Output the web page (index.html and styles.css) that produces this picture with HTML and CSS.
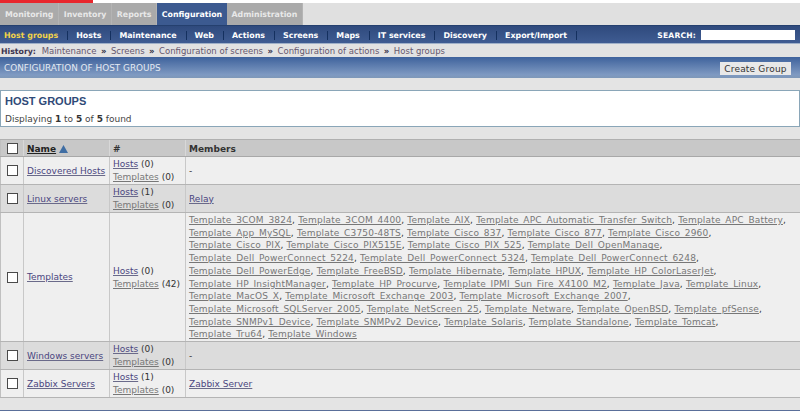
FILE: index.html
```html
<!DOCTYPE html>
<html lang="en">
<head>
<meta charset="utf-8">
<title>Host groups</title>
<link rel="stylesheet" href="styles.css">
</head>
<body>
<div class="topline"><div class="redbar"></div></div>
<nav class="tabs">
  <a class="tab">Monitoring</a><a class="tab">Inventory</a><a class="tab">Reports</a><a class="tab active">Configuration</a><a class="tab">Administration</a>
</nav>
<nav class="subnav">
  <a class="sub current">Host groups</a><a class="sub">Hosts</a><a class="sub">Maintenance</a><a class="sub">Web</a><a class="sub">Actions</a><a class="sub">Screens</a><a class="sub">Maps</a><a class="sub">IT services</a><a class="sub">Discovery</a><a class="sub">Export/Import</a>
  <div class="search"><span>SEARCH:</span><input class="search-input" type="text"></div>
</nav>
<div class="history"><b>History:</b> <a>Maintenance</a><span class="sep">»</span><a>Screens</a><span class="sep">»</span><a>Configuration of screens</a><span class="sep">»</span><a>Configuration of actions</a><span class="sep">»</span><a>Host groups</a></div>
<header class="pagebar"><span>CONFIGURATION OF HOST GROUPS</span><button class="create" type="button">Create Group</button></header>
<section class="summary">
  <h1>HOST GROUPS</h1>
  <p>Displaying <b>1</b> to <b>5</b> of <b>5</b> found</p>
</section>
<table class="groups">
  <colgroup><col class="c-check"><col class="c-name"><col class="c-count"><col></colgroup>
  <thead>
    <tr><th class="chk"><span class="box head"></span></th><th><a class="sort">Name</a> <svg class="arrow" width="9" height="8" viewBox="0 0 9 8"><path d="M4.5 0 9 8H0z" fill="#3f6da3"/></svg></th><th>#</th><th>Members</th></tr>
  </thead>
  <tbody>
    <tr><td class="chk"><span class="box"></span></td><td><a class="host">Discovered Hosts</a></td><td><a class="host">Hosts</a> (0)<br><a class="tpl">Templates</a> (0)</td><td class="dash">-</td></tr>
    <tr class="alt"><td class="chk"><span class="box"></span></td><td><a class="host">Linux servers</a></td><td><a class="host">Hosts</a> (1)<br><a class="tpl">Templates</a> (0)</td><td><a class="host">Relay</a></td></tr>
    <tr><td class="chk"><span class="box"></span></td><td><a class="host">Templates</a></td><td><a class="host">Hosts</a> (0)<br><a class="tpl">Templates</a> (42)</td><td class="members">
      <a class="tpl">Template_3COM_3824</a>, <a class="tpl">Template_3COM_4400</a>, <a class="tpl">Template_AIX</a>, <a class="tpl">Template_APC_Automatic_Transfer_Switch</a>, <a class="tpl">Template_APC_Battery</a>,<br>
      <a class="tpl">Template_App_MySQL</a>, <a class="tpl">Template_C3750-48TS</a>, <a class="tpl">Template_Cisco_837</a>, <a class="tpl">Template_Cisco_877</a>, <a class="tpl">Template_Cisco_2960</a>,<br>
      <a class="tpl">Template_Cisco_PIX</a>, <a class="tpl">Template_Cisco_PIX515E</a>, <a class="tpl">Template_Cisco_PIX_525</a>, <a class="tpl">Template_Dell_OpenManage</a>,<br>
      <a class="tpl">Template_Dell_PowerConnect_5224</a>, <a class="tpl">Template_Dell_PowerConnect_5324</a>, <a class="tpl">Template_Dell_PowerConnect_6248</a>,<br>
      <a class="tpl">Template_Dell_PowerEdge</a>, <a class="tpl">Template_FreeBSD</a>, <a class="tpl">Template_Hibernate</a>, <a class="tpl">Template_HPUX</a>, <a class="tpl">Template_HP_ColorLaserJet</a>,<br>
      <a class="tpl">Template_HP_InsightManager</a>, <a class="tpl">Template_HP_Procurve</a>, <a class="tpl">Template_IPMI_Sun_Fire_X4100_M2</a>, <a class="tpl">Template_Java</a>, <a class="tpl">Template_Linux</a>,<br>
      <a class="tpl">Template_MacOS_X</a>, <a class="tpl">Template_Microsoft_Exchange_2003</a>, <a class="tpl">Template_Microsoft_Exchange_2007</a>,<br>
      <a class="tpl">Template_Microsoft_SQLServer_2005</a>, <a class="tpl">Template_NetScreen_25</a>, <a class="tpl">Template_Netware</a>, <a class="tpl">Template_OpenBSD</a>, <a class="tpl">Template_pfSense</a>,<br>
      <a class="tpl">Template_SNMPv1_Device</a>, <a class="tpl">Template_SNMPv2_Device</a>, <a class="tpl">Template_Solaris</a>, <a class="tpl">Template_Standalone</a>, <a class="tpl">Template_Tomcat</a>,<br>
      <a class="tpl">Template_Tru64</a>, <a class="tpl">Template_Windows</a>
    </td></tr>
    <tr class="alt"><td class="chk"><span class="box"></span></td><td><a class="host">Windows servers</a></td><td><a class="host">Hosts</a> (0)<br><a class="tpl">Templates</a> (0)</td><td class="dash">-</td></tr>
    <tr><td class="chk"><span class="box"></span></td><td><a class="host">Zabbix Servers</a></td><td><a class="host">Hosts</a> (1)<br><a class="tpl">Templates</a> (0)</td><td><a class="host">Zabbix Server</a></td></tr>
  </tbody>
</table>
<div class="footline"></div>
</body>
</html>
```

FILE: styles.css
```css
* { box-sizing: border-box; }
html, body { height: 100%; }
body {
  margin: 0;
  height: 411px;
  overflow: hidden;
  display: flex;
  flex-direction: column;
  background: #e4e4e4;
  font-family: "DejaVu Sans", sans-serif;
  font-size: 9px;
  color: #333;
}
a { cursor: pointer; }
.topline { height: 3px; background: #fff; flex: none; }
.redbar { width: 93px; height: 3px; background: #e8262c; }
.tabs { height: 22px; flex: none; display: flex; background: #e0e0e0; }
.tab {
  display: flex;
  align-items: center;
  padding: 1px 4.7px 0;
  background: #aaa;
  color: #e8e8e8;
  font-weight: bold;
  font-size: 7.85px;
  border-right: 1px solid #b4b4b4;
}
.tab:first-child { padding-left: 5px; }
.tab.active { background: #3c5a90; color: #fff; border-right: 0; }
.subnav {
  height: 19px;
  flex: none;
  display: flex;
  align-items: center;
  padding: 1px 0 0 4px;
  background: linear-gradient(#2f4a7d, #3f5c92);
  border-top: 1px solid #25406f;
  border-bottom: 1px solid #9fb0c8;
  color: #fff;
  font-weight: bold;
  font-size: 7.9px;
}
.sub { padding-right: 9px; margin-right: 8px; border-right: 1px solid #14305f; line-height: 9px; height: 9px; }
.sub.current { color: #f0d24a; }
.search { margin-left: auto; display: flex; align-items: center; gap: 5px; padding-right: 5px; font-size: 7.6px; letter-spacing: .2px; }
.search-input { width: 94px; height: 10px; border: 0; background: #fff; padding: 0; display: block; }
.history {
  height: 13px;
  flex: none;
  padding: 0 1px;
  line-height: 15px;
  background: #e2e2e2;
  color: #66586e;
  white-space: nowrap;
  font-size: 8.5px;
}
.history b { color: #3c3550; font-size: 7.8px; margin-right: 3px; }
.sep { margin: 0 4.5px; color: #2c2c44; font-weight: bold; }
.pagebar {
  height: 21px;
  flex: none;
  display: flex;
  align-items: center;
  justify-content: space-between;
  padding: 0 9px 0 4px;
  background: linear-gradient(#3e629c, #7f9ac2 85%, #7e98b8);
  color: #e3e9f2;
  font-size: 8.9px;
}
.create {
  height: 13px;
  width: 71px;
  padding: 0;
  margin-top: 2px;
  border: 0;
  background: #e8e8e8;
  font: 9px "DejaVu Sans", sans-serif;
  color: #333;
  letter-spacing: .2px;
}
.summary {
  margin-top: 12px;
  height: 37px;
  flex: none;
  background: #fff;
  border: 1px solid #8aa6b8;
  padding: 0 4px;
}
.summary h1 { margin: 3px 0 0; font: bold 11px/14px "Liberation Sans", sans-serif; color: #2f4a78; }
.summary p { margin: 6px 0 0; line-height: 11px; color: #444; }
.summary b { font-weight: bold; color: #333; }
.groups {
  margin-top: 12px;
  width: 800px;
  flex: none;
  border-collapse: collapse;
  table-layout: fixed;
  background: #efefef;
  border-bottom: 1px solid #b9b9b9;
}
.c-check { width: 23px; }
.c-name { width: 86px; }
.c-count { width: 76px; }
.groups th {
  height: 17px;
  background: #c8c8c8;
  text-align: left;
  padding: 1px 3px 0;
  font-weight: bold;
  color: #333;
  border-top: 1px solid #b0b0b0;
  border-bottom: 1px solid #a8a8a8;
  border-left: 1px solid #d8d8d8;
}
.groups td {
  height: 28px;
  padding: 1px 3px 0;
  line-height: 12.7px;
  border-bottom: 1px solid #b4b4b4;
  border-left: 1px solid #c8c8c8;
  white-space: nowrap;
  color: #333;
}
.groups th:first-child, .groups td:first-child { border-left: 1px solid #c0c0c0; }
.groups .members { letter-spacing: .18px; }
.alt td { background: #dcdcdc; }
.chk { text-align: center; }
.groups .chk { padding: 0; }
.box {
  display: block;
  width: 11px;
  height: 11px;
  margin: 0 auto;
  background: #fff;
  border: 1px solid #4a4a4a;
}
.sort { color: #222; text-decoration: underline; }
.arrow { vertical-align: -1px; }
.host { color: #4a4580; text-decoration: underline; text-decoration-color: #6a6a8a; }
.tpl { color: #777; text-decoration: underline; }
.dash { color: #666; }
.footline { margin-top: auto; height: 1px; flex: none; background: #5a6f9a; }
```
